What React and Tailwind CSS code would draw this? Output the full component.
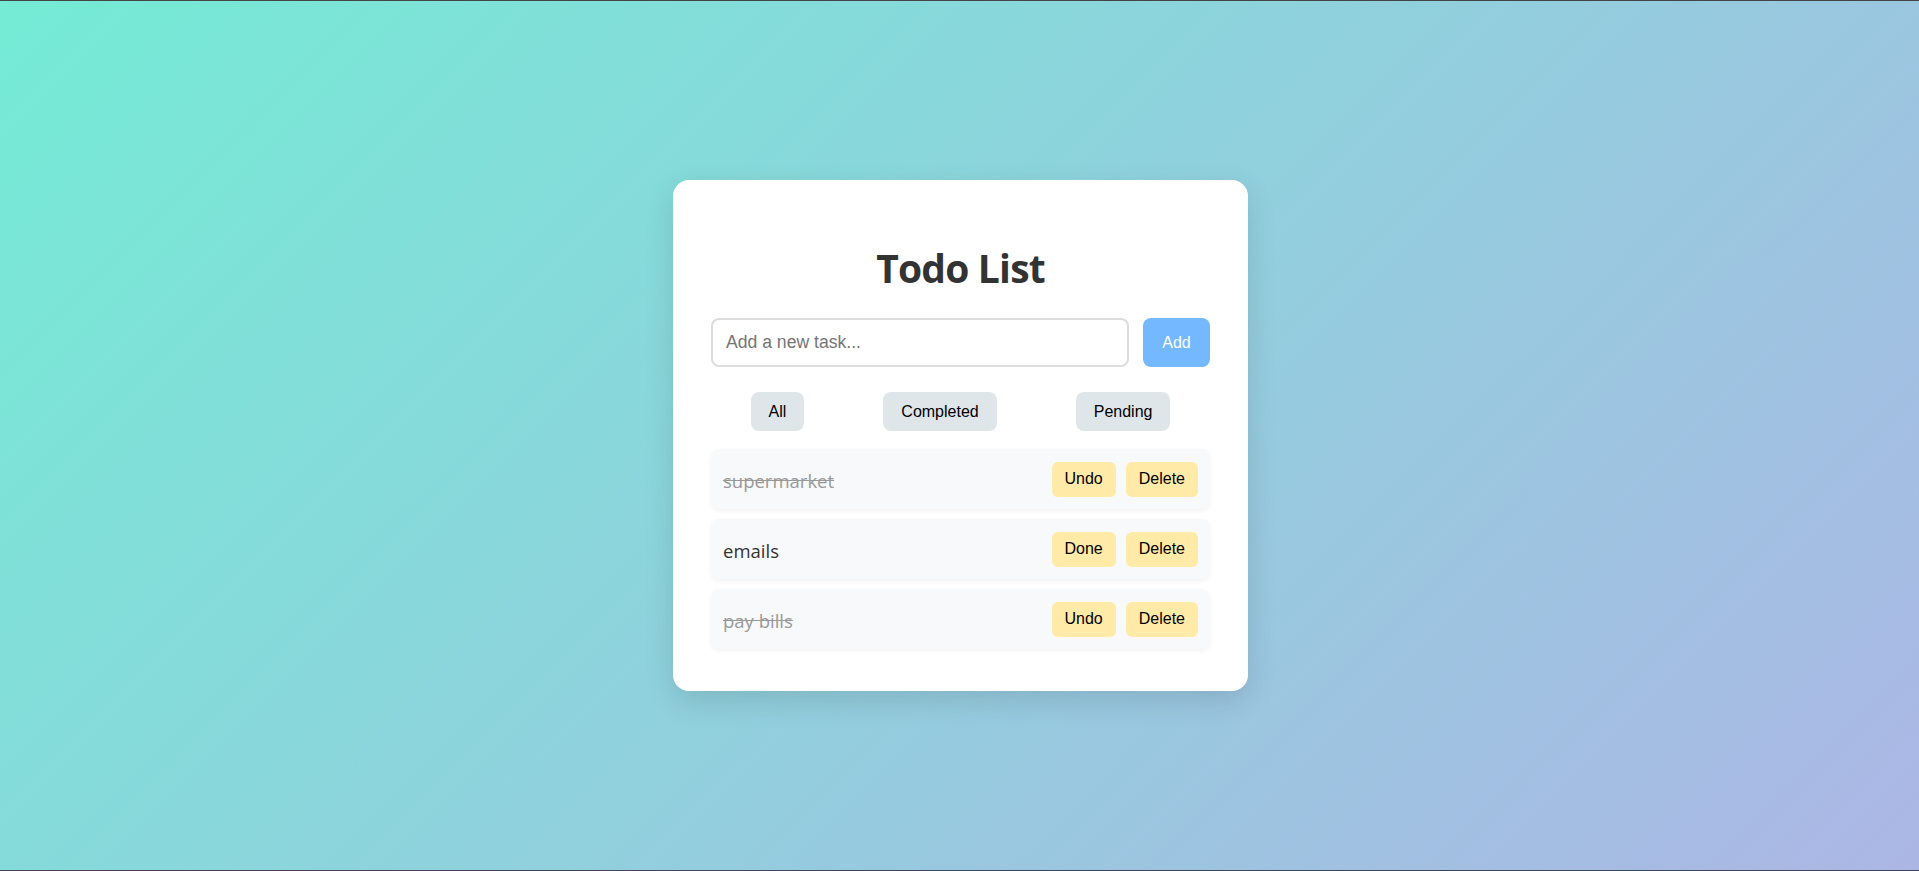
import React, { useState } from "react";

export default function App() {
  const [tasks] = useState([
    { id: 1, text: "supermarket", done: true },
    { id: 2, text: "emails", done: false },
    { id: 3, text: "pay bills", done: true },
  ]);

  return (
    <div className="w-full h-[871px] border-t border-t-[#444444] border-b border-b-[#3f4452] bg-[linear-gradient(135deg,#74ebd5,#acb6e5)] flex items-start justify-center">
      <div className="mt-[179px] ml-[2px] w-[575px] bg-white rounded-[16px] shadow-[0_10px_30px_rgba(0,0,0,0.12)] px-[38px] pt-[64px] pb-[42px] flex flex-col">
        <h1 className="text-center font-bold text-[39px] leading-[48px] tracking-[-0.8px] text-[#333333] [font-family:'Open_Sans',sans-serif] m-0">
          Todo List
        </h1>
        <div className="mt-[26px] flex gap-[14px] h-[49px]">
          <input
            type="text"
            placeholder="Add a new task..."
            className="flex-1 min-w-0 h-[49px] border-2 border-[#dddddd] rounded-[8px] px-[13px] text-[17.6px] [font-family:'Liberation_Sans',Arial,sans-serif] placeholder:text-[#757575] outline-none text-[#333]"
          />
          <button className="h-[49px] w-[67px] bg-[#74b9ff] text-white rounded-[8px] text-[16px] [font-family:'Liberation_Sans',Arial,sans-serif]">
            Add
          </button>
        </div>
        <div className="mt-[25px] flex justify-around">
          {["All", "Completed", "Pending"].map((f) => (
            <button
              key={f}
              className="h-[39px] px-[18px] bg-[#dfe6e9] rounded-[8px] text-[16px] text-black [font-family:'Liberation_Sans',Arial,sans-serif]"
            >
              {f}
            </button>
          ))}
        </div>
        <div className="mt-[18px] flex flex-col gap-[10px]">
          {tasks.map((t) => (
            <div
              key={t.id}
              className="h-[60px] bg-[#f8f9fa] rounded-[8px] shadow-[0_2px_5px_rgba(0,0,0,0.05)] flex items-center justify-between pl-[12px] pr-[12px]"
            >
              <span
                className={
                  "pt-[4px] text-[18.5px] [font-family:'Open_Sans',sans-serif] " +
                  (t.done ? "line-through text-[#999999]" : "text-[#333333]")
                }
              >
                {t.text}
              </span>
              <div className="flex gap-[10px]">
                <button className="h-[35px] px-[13px] bg-[#ffeaa7] rounded-[6px] text-[16px] text-black [font-family:'Liberation_Sans',Arial,sans-serif]">
                  {t.done ? "Undo" : "Done"}
                </button>
                <button className="h-[35px] px-[13px] bg-[#ffeaa7] rounded-[6px] text-[16px] text-black [font-family:'Liberation_Sans',Arial,sans-serif]">
                  Delete
                </button>
              </div>
            </div>
          ))}
        </div>
      </div>
    </div>
  );
}
